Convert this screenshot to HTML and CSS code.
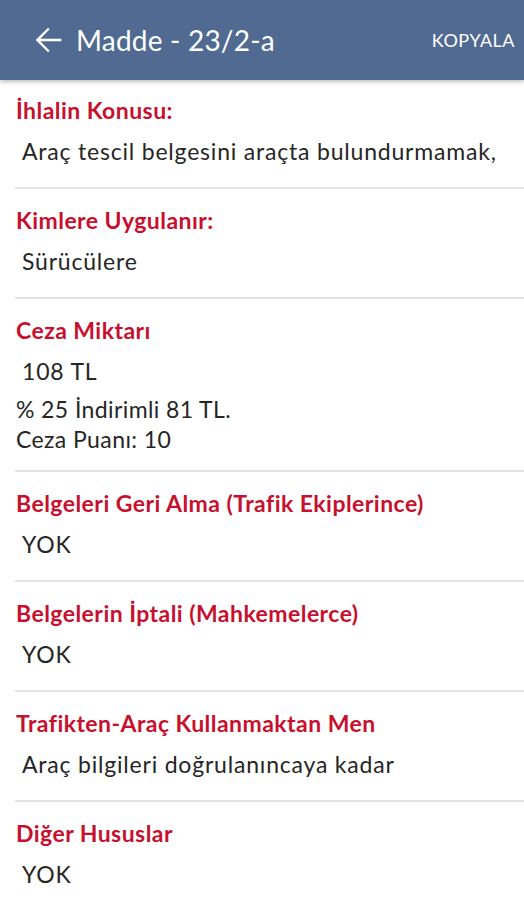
FILE: index.html
```
<!DOCTYPE html>
<html lang="tr">
<head>
<meta charset="utf-8">
<link rel="stylesheet" href="styles.css">
</head>
<body>
<header class="appbar">
  <svg class="back" viewBox="0 0 24 24" width="40" height="40"><path d="M20 11.2H7.4l5.6-5.6L12 4.6l-7.4 7.4 7.4 7.4 1-1-5.6-5.6H20v-1.6z" fill="#fff"/></svg>
  <h1 class="title">Madde - 23/2-a</h1>
  <span class="action">KOPYALA</span>
</header>
<main class="list">
  <section class="item">
    <h2 class="label">İhlalin Konusu:</h2>
    <p class="value">Araç tescil belgesini araçta bulundurmamak,</p>
  </section>
  <section class="item">
    <h2 class="label">Kimlere Uygulanır:</h2>
    <p class="value">Sürücülere</p>
  </section>
  <section class="item item-fine">
    <h2 class="label">Ceza Miktarı</h2>
    <p class="value">108 TL</p>
    <div class="extra">
      <p>% 25 İndirimli 81 TL.</p>
      <p>Ceza Puanı: 10</p>
    </div>
  </section>
  <section class="item">
    <h2 class="label">Belgeleri Geri Alma (Trafik Ekiplerince)</h2>
    <p class="value">YOK</p>
  </section>
  <section class="item">
    <h2 class="label">Belgelerin İptali (Mahkemelerce)</h2>
    <p class="value">YOK</p>
  </section>
  <section class="item">
    <h2 class="label">Trafikten-Araç Kullanmaktan Men</h2>
    <p class="value">Araç bilgileri doğrulanıncaya kadar</p>
  </section>
  <section class="item">
    <h2 class="label">Diğer Hususlar</h2>
    <p class="value">YOK</p>
  </section>
</main>
</body>
</html>
```
FILE: styles.css
```
* { box-sizing: border-box; }
html, body { margin: 0; padding: 0; background: #fff; }
body { font-family: "Lato", "Noto Sans", sans-serif; overflow: hidden; }

.appbar {
  height: 80px;
  background: #506a92;
  display: flex;
  align-items: center;
  padding: 0 9px 0 28px;
  color: #fff;
  box-shadow: 0 2px 4px rgba(0,0,0,0.25);
  position: relative;
  z-index: 1;
}
.back { flex: none; margin-right: 8px; }
.title {
  margin: 0;
  flex: 1;
  font-family: "Lato", sans-serif;
  font-weight: 400;
  font-size: 28px;
  letter-spacing: 0.2px;
}
.action {
  font-family: "Lato", sans-serif;
  font-size: 18px;
  font-weight: 400;
  letter-spacing: 0.5px;
}

.list { padding-top: 15px; }
.item {
  margin-left: 15px;
  padding: 0 0 21px 1px;
  border-bottom: 2px solid #e3e3e3;
}
.item + .item { padding-top: 16px; }
.item:last-child { border-bottom: none; }

.label {
  margin: 0;
  font-family: "Lato", sans-serif;
  font-weight: 700;
  font-size: 23px;
  line-height: 30px;
  letter-spacing: 0.45px;
  color: #c8102e;
}
.value {
  margin: 11px 0 0;
  padding-left: 6px;
  font-size: 23px;
  line-height: 30px;
  letter-spacing: 0.8px;
  color: #262626;
}
.extra { margin: 8px 0 -5px; font-size: 23px; line-height: 30px; letter-spacing: 0.4px; color: #262626; }
.extra p { margin: 0; }
```
